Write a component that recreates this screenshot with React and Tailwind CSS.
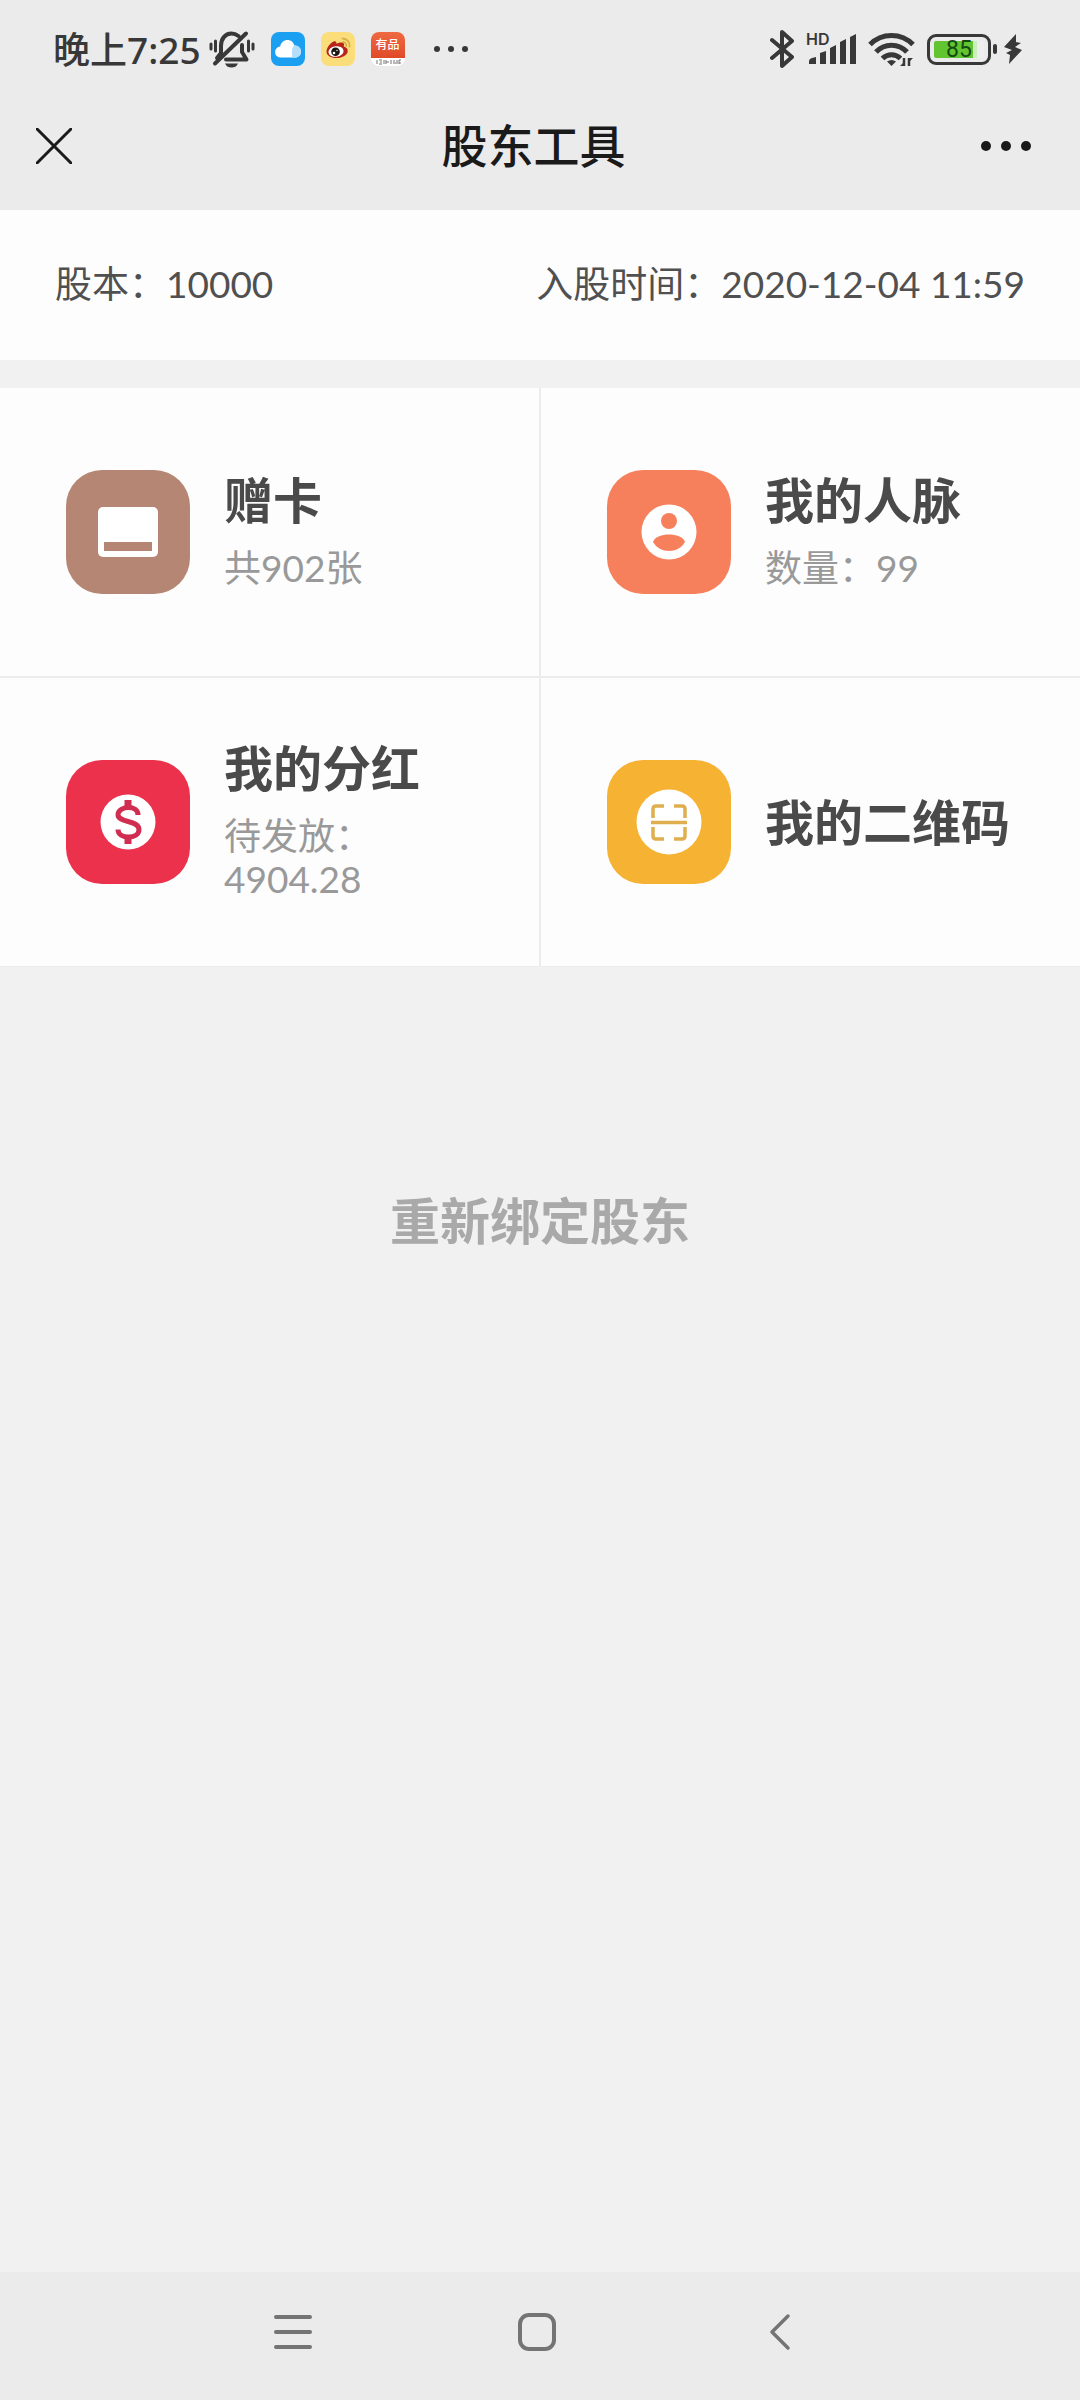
const INK = "#383838";

function BellOff() {
  return (
    <svg className="h-10 w-[46px]" viewBox="0 0 46 40" fill="none" stroke={INK} strokeWidth="4" strokeLinecap="round" strokeLinejoin="round" aria-hidden="true">
      <path d="M12 21v-4c0-7 4-12.500 10.500-12.500 3 0 5 1 7 2.500M33 16v7l4.500 7.500H17M37 4.500L6 34.500" />
      <path d="M12 19v5l-4 5" />
      <path d="M2 15v5M6.500 12v10M39.500 12v10M44 15v5" strokeWidth="3" />
      <path d="M16 34.500h13c-1.500 3-3.500 4-6.500 4s-5-1-6.500-4z" fill={INK} stroke="none" />
    </svg>
  );
}

function CloudApp() {
  return (
    <svg className="size-[34px]" viewBox="0 0 34 34" aria-hidden="true">
      <rect width="34" height="34" rx="8" fill="#1b9ff0" />
      <path d="M10 25.500a5.500 5.500 0 0 1-.8-11c.8-4 3.500-6.500 7.300-6.500 3.500 0 6 2.200 6.800 5.500 4 0 6.700 2.700 6.700 6 0 3.500-2.500 6-6 6z" fill="#fff" />
      <path d="M21 25.500V19c0-3 1.200-5 3.200-5.500 3.500.3 5.800 2.800 5.800 6 0 3.500-2.500 6-6 6z" fill="#b4defa" />
    </svg>
  );
}

function WeiboApp() {
  return (
    <svg className="size-[34px]" viewBox="0 0 34 34" aria-hidden="true">
      <rect width="34" height="34" rx="8" fill="#fbdd79" />
      <path d="M12.500 9.500c2-.8 3.200.2 3 2.200 3-1.500 7-2 7.500.3.200 1-.2 1.800-.3 2.600 2.500.8 4.300 2.200 4 4.800-.6 4-6 6.600-11.500 6.600S5.500 23.500 5.500 19.500c0-3.500 3.500-8.500 7-10z" fill="#b8231c" />
      <ellipse cx="15" cy="19.500" rx="7.600" ry="5.300" fill="#fff" transform="rotate(-8 15 19.500)" />
      <circle cx="14.500" cy="19.800" r="4.300" fill="#191512" />
      <circle cx="13" cy="21" r="1.300" fill="#fff" />
      <circle cx="16" cy="18.500" r=".7" fill="#fff" />
      <path d="M21.500 6.500a7 7 0 0 1 7 8M22 10a3.500 3.500 0 0 1 3.200 4" fill="none" stroke="#d8b04c" strokeWidth="1.800" strokeLinecap="round" />
    </svg>
  );
}

function YoupinApp() {
  return (
    <div className="flex size-[34px] flex-col overflow-hidden rounded-lg bg-white">
      <span className="flex h-[26px] items-center justify-center bg-linear-to-b from-[#ee6a42] to-[#e04a28] text-xs leading-none font-medium text-white">有品</span>
      <svg className="h-2 w-full" viewBox="0 0 34 8" stroke="#777" strokeWidth="1" aria-hidden="true">
        <path d="M6 2v4M8 2h3M9 4h2M8 6h3M13 2v4M15 2v4M15 4h3M20 2v4M22 3h2M22 5h3M26 2v4M28 2v4M28 2h2M28 5h2" />
      </svg>
    </div>
  );
}

function Bluetooth() {
  return (
    <svg className="h-10 w-6" viewBox="0 0 24 40" fill="none" stroke={INK} strokeWidth="4" strokeLinecap="round" strokeLinejoin="round" aria-hidden="true">
      <path d="M2 11l20 17-10 9V3l10 9L2 29" />
    </svg>
  );
}

function Signal() {
  return (
    <div className="relative">
      <svg className="h-8 w-[50px]" viewBox="0 0 50 32" fill={INK} aria-hidden="true">
        <path d="M3 28q0-3 7-4v7H3zM14 20l6-2v13h-6zM24 15l6-3v19h-6zM34 9l6-3v25h-6zM44 4l6-3v30h-6z" />
      </svg>
      <span className="absolute -top-1 left-0 font-[Inter,sans-serif] text-base leading-5 font-semibold">HD</span>
    </div>
  );
}

function Wifi() {
  return (
    <svg className="h-9 w-[47px]" viewBox="0 0 47 36" aria-hidden="true">
      <g fill="none" stroke={INK} strokeWidth="5">
        <path d="M2 13.500a30 30 0 0 1 43 0" />
        <path d="M8 21a21 21 0 0 1 31 0" />
        <path d="M14.500 27.500a12.500 12.500 0 0 1 18 0" />
      </g>
      <path d="M19 30.500q4.500-3 9 0l-4.500 4.500z" fill={INK} />
      <path d="M36 27v8M41 35v-8" stroke={INK} strokeWidth="2.500" />
      <path d="M37 35h-5l5-5zM40 27h5l-5 5z" fill={INK} />
    </svg>
  );
}

function Battery() {
  return (
    <div className="flex items-center gap-0.5">
      <div className="flex h-[31px] w-16 items-center justify-center rounded-[9px] border-[3px] border-[#383838] bg-[linear-gradient(to_right,#62c431_43px,#c9efbc_43px,#c9efbc_47px,#eee_47px)] bg-clip-content p-1 font-[Roboto,sans-serif] text-[23px] leading-none text-[#124a10]">
        85
      </div>
      <div className="h-2.5 w-1 rounded-xs bg-[#383838]" />
    </div>
  );
}

function Bolt() {
  return (
    <svg className="h-8 w-5" viewBox="0 0 20 32" fill={INK} aria-hidden="true">
      <path d="M13 1L1 14l8 3-6 3 4 2-1 9 13-14-7-3 6-4-5-1z" />
    </svg>
  );
}

function CardIcon() {
  return (
    <svg className="h-[50px] w-[60px]" viewBox="0 0 60 50" aria-hidden="true">
      <rect width="60" height="50" rx="5" fill="#fff" />
      <rect x="6" y="35" width="48" height="9" fill="#b58674" />
    </svg>
  );
}

function PersonIcon() {
  return (
    <svg className="size-14" viewBox="0 0 56 56" aria-hidden="true">
      <circle cx="28" cy="28" r="27.500" fill="#fff" />
      <circle cx="28" cy="17" r="8" fill="#f7805c" />
      <path d="M12 38c2-5.500 9-7.500 16-7.500s14 2 16 7.500c-3.500 6-9.500 9-16 9s-12.500-3-16-9z" fill="#f7805c" />
    </svg>
  );
}

function MoneyIcon() {
  return (
    <svg className="size-14" viewBox="0 0 56 56" aria-hidden="true">
      <circle cx="28" cy="28" r="27.500" fill="#fff" />
      <path d="M38 21c0-5-4.500-7.500-9.500-7.500S18 16 18 20.500c0 9 21 5 21 15 0 5-5 7.500-10.500 7.500S18 40.500 18 35.500" fill="none" stroke="#d02d50" strokeWidth="5" />
      <path d="M28 6v8M28 42v8" stroke="#d02d50" strokeWidth="7" />
    </svg>
  );
}

function ScanIcon() {
  return (
    <svg className="size-[66px]" viewBox="0 0 66 66" aria-hidden="true">
      <circle cx="33" cy="33" r="32.500" fill="#fff" />
      <path d="M17 29V20q0-3 3-3h8M38 17h8q3 0 3 3v9M17 38v9q0 3 3 3h8M38 50h8q3 0 3-3v-9M15 33.500h36" fill="none" stroke="#dfae4e" strokeWidth="3.500" />
    </svg>
  );
}

function Tile({ color, icon, title, children }) {
  return (
    <a href="#" className="flex items-center gap-[34px] bg-[#fdfdfd] pl-[66px]">
      <span className={`flex size-[124px] shrink-0 items-center justify-center rounded-[36px] ${color}`}>{icon}</span>
      <span className="flex flex-col gap-[22px]">
        <span className="text-[49px] leading-12 font-bold text-[#4a4a4a]">{title}</span>
        {children && <span className="text-[37px] leading-[43px] text-[#999]">{children}</span>}
      </span>
    </a>
  );
}

export default function App() {
  return (
    <div className="flex min-h-screen flex-col bg-[#f1f1f1] font-[Lato,'Noto_Sans_CJK_SC',sans-serif]">
      <div className="flex h-[98px] items-center justify-between bg-[#ebebeb] pr-[57px] pl-[53px] text-[#383838]">
        <div className="flex items-center">
          <span className="font-['Noto_Sans','Noto_Sans_CJK_SC',sans-serif] text-[37px] leading-none font-medium">晚上7:25</span>
          <div className="ml-2 flex items-center gap-4">
            <BellOff />
            <CloudApp />
            <WeiboApp />
            <YoupinApp />
          </div>
          <svg className="ml-7 h-2 w-9" viewBox="0 0 36 8" fill={INK} aria-hidden="true">
            <circle cx="4" cy="4" r="3" /><circle cx="18" cy="4" r="3" /><circle cx="32" cy="4" r="3" />
          </svg>
        </div>
        <div className="flex items-center gap-3">
          <Bluetooth />
          <Signal />
          <Wifi />
          <div className="flex items-center gap-1.5">
            <Battery />
            <Bolt />
          </div>
        </div>
      </div>

      <header className="grid h-28 grid-cols-[1fr_auto_1fr] items-center bg-[#ebebeb] pr-[49px] pb-4 pl-9 text-[#1a1a1a]">
        <button type="button" aria-label="关闭" className="justify-self-start">
          <svg className="size-9" viewBox="0 0 36 36" stroke="currentColor" strokeWidth="3" strokeLinecap="round" aria-hidden="true">
            <path d="M1 1l34 34M35 1L1 35" />
          </svg>
        </button>
        <h1 className="text-[46px] leading-none font-medium">股东工具</h1>
        <button type="button" aria-label="更多" className="justify-self-end">
          <svg className="h-3 w-[50px]" viewBox="0 0 50 12" fill="currentColor" aria-hidden="true">
            <circle cx="5" cy="6" r="5" /><circle cx="25" cy="6" r="5" /><circle cx="45" cy="6" r="5" />
          </svg>
        </button>
      </header>

      <main className="flex-1">
        <section className="flex h-[150px] items-center justify-between bg-[#fdfdfd] px-[55px] pb-0.5 text-[37px] text-[#505050]">
          <p>股本：10000</p>
          <p>入股时间：2020-12-04 11:59</p>
        </section>

        <nav className="mt-7 grid auto-rows-[288px] grid-cols-2 gap-0.5 border-b border-[#ececec] bg-[#ececec]">
          <Tile color="bg-[#b58674]" icon={<CardIcon />} title="赠卡">共902张</Tile>
          <Tile color="bg-[#f7805c]" icon={<PersonIcon />} title="我的人脉">数量：99</Tile>
          <Tile color="bg-[#eb314c]" icon={<MoneyIcon />} title="我的分红">待发放：<br />4904.28</Tile>
          <Tile color="bg-[#f6b232]" icon={<ScanIcon />} title="我的二维码" />
        </nav>

        <div className="mt-[219px] flex justify-center">
          <button type="button" className="text-[50px] leading-[70px] font-bold text-[#a9a9a9]">重新绑定股东</button>
        </div>
      </main>

      <footer className="flex h-32 items-center justify-center gap-[204px] bg-[#ebebeb] pr-1.5 pb-2 text-[#747474]">
        <button type="button" aria-label="最近任务">
          <svg className="size-10" viewBox="0 0 40 40" stroke="currentColor" strokeWidth="4" strokeLinecap="round" aria-hidden="true">
            <path d="M3 5h34M3 20h34M3 35h34" />
          </svg>
        </button>
        <button type="button" aria-label="主屏幕">
          <svg className="size-10" viewBox="0 0 40 40" fill="none" stroke="currentColor" strokeWidth="4" aria-hidden="true">
            <rect x="3" y="3" width="34" height="34" rx="9" />
          </svg>
        </button>
        <button type="button" aria-label="返回">
          <svg className="size-10" viewBox="0 0 40 40" fill="none" stroke="currentColor" strokeWidth="3.500" strokeLinecap="round" strokeLinejoin="round" aria-hidden="true">
            <path d="M27 4L11 20l16 16" />
          </svg>
        </button>
      </footer>
    </div>
  );
}
